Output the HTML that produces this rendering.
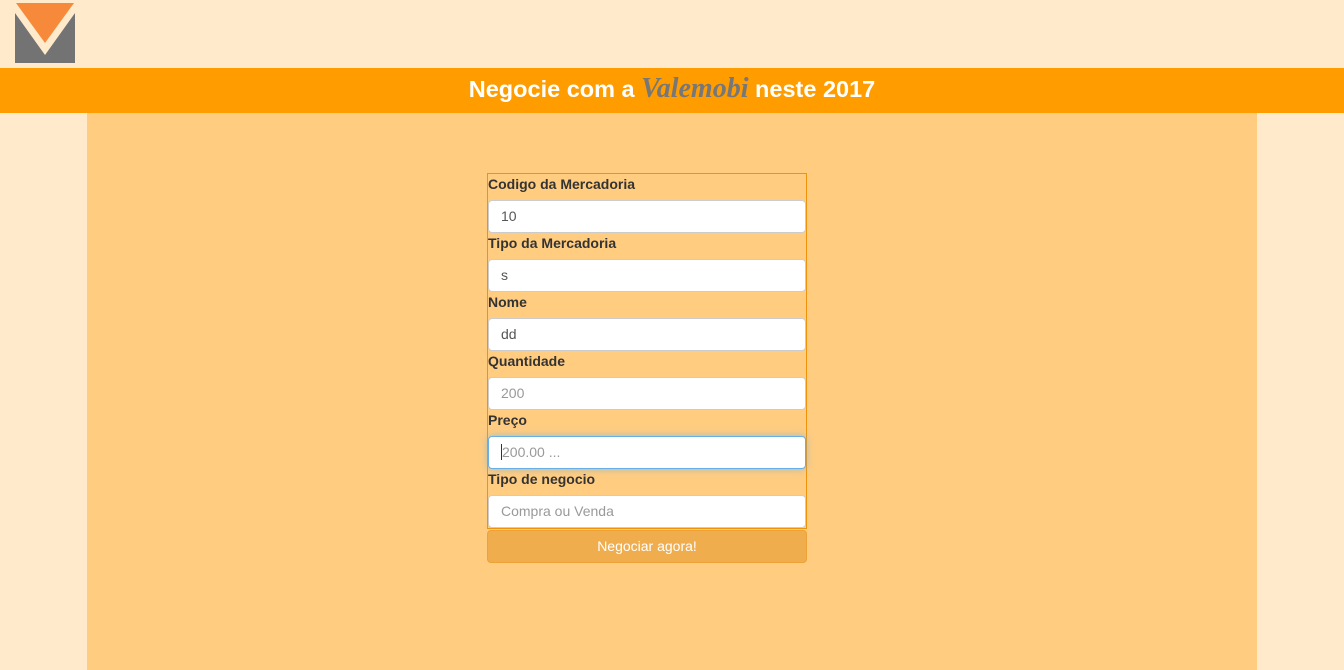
<!DOCTYPE html>
<html><head><style>
*{box-sizing:border-box}
body{margin:0;width:1344px;height:670px;background:#ffebcc;font-family:"Liberation Sans",sans-serif;position:relative;overflow:hidden}
.hdr{position:absolute;left:0;top:68px;width:1344px;height:45px;background:#ff9c00;color:#fff;font-weight:bold;font-size:23.5px;text-align:center;line-height:41px}
.hdr i{font-family:"Liberation Serif",serif;color:#777;font-size:28px}
.main{position:absolute;left:87px;top:113px;width:1170px;height:557px;background:#ffcc80}
.form{position:absolute;left:487px;top:173px;width:320px;height:356px;border:1px solid #f0930a}
label{position:absolute;left:0;font-size:14px;font-weight:bold;color:#333}
.in{position:absolute;left:0;width:318px;height:33px;background:#fff;border:1px solid #ccc;border-radius:4px;font-size:14px;color:#555;padding:7px 12px;line-height:17px}
.ph{color:#999}
.focus{border-color:#66afe9;box-shadow:0 0 8px rgba(102,175,233,.6)}
.btn{position:absolute;left:487px;top:530px;width:320px;height:33px;background:#f0ad4e;border:1px solid #eea236;border-radius:4px;color:#fff;font-size:14px;text-align:center;line-height:31px}
</style></head><body>
<svg style="position:absolute;left:15px;top:3px" width="60" height="60" viewBox="0 0 60 60">
<rect width="60" height="60" fill="#737373"/>
<polygon points="0,0 60,0 60,10 30,52 0,10" fill="#ffebcc"/>
<polygon points="1,0 59,0 30,40" fill="#f78a3a"/>
</svg>
<div class="hdr">Negocie com a <i>Valemobi</i> neste 2017</div>
<div class="main"></div>
<div class="form">
<label style="top:2px">Codigo da Mercadoria</label>
<div class="in" style="top:26px">10</div>
<label style="top:61px">Tipo da Mercadoria</label>
<div class="in" style="top:85px">s</div>
<label style="top:120px">Nome</label>
<div class="in" style="top:144px">dd</div>
<label style="top:179px">Quantidade</label>
<div class="in ph" style="top:203px">200</div>
<label style="top:238px">Preço</label>
<div class="in ph focus" style="top:262px"><span style="border-left:1px solid #333"></span>200.00 ...</div>
<label style="top:297px">Tipo de negocio</label>
<div class="in ph" style="top:321px">Compra ou Venda</div>
</div>
<div class="btn">Negociar agora!</div>
</body></html>
